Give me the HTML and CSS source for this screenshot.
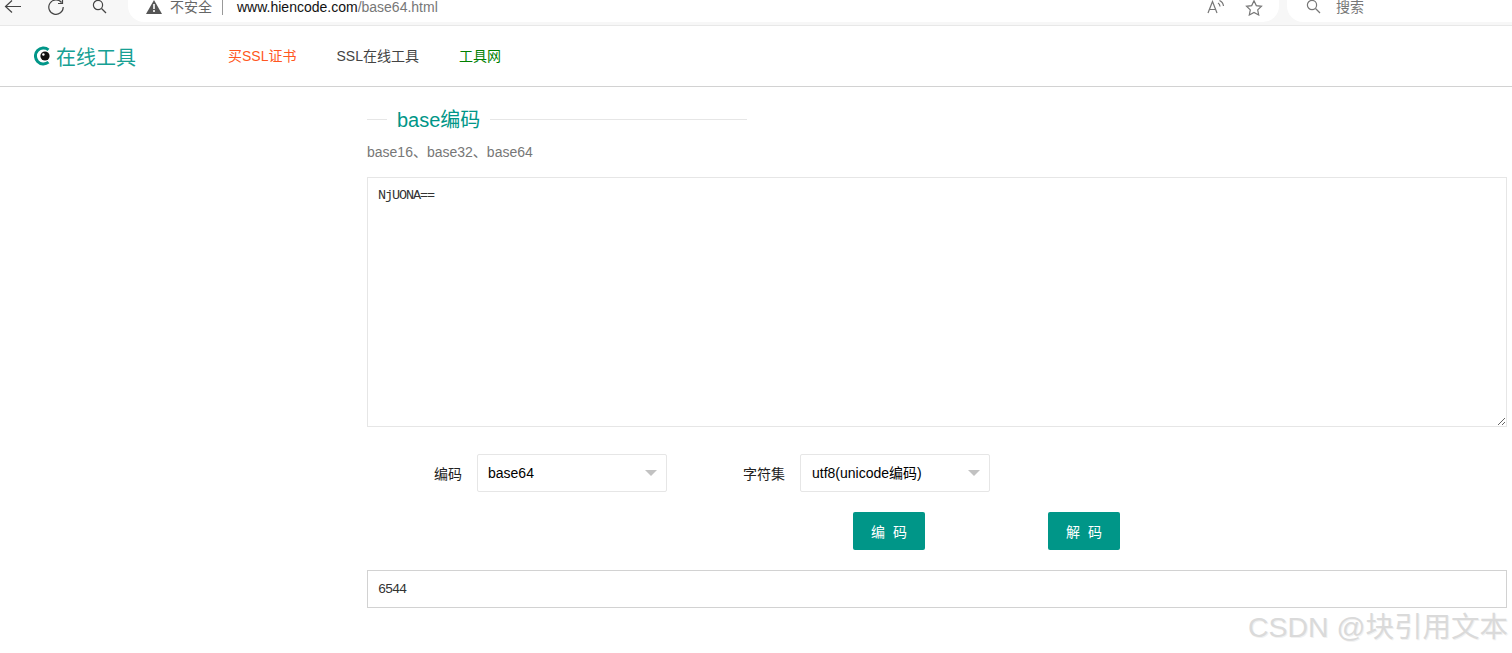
FILE: index.html
```html
<!DOCTYPE html>
<html lang="zh-CN">
<head>
    <meta charset="UTF-8">
    <meta name="viewport" content="width=device-width, initial-scale=1.0">
    <title>base编码</title>
    <link rel="stylesheet" href="styles.css">
</head>
<body>
    <div class="browser-bar">
        <svg class="bar-icon back" width="18" height="14" viewBox="0 0 18 14"><path d="M17 6.5H2M8 0.5L1.5 6.5L8 12.5" /></svg>
        <svg class="bar-icon reload" width="18" height="16" viewBox="0 0 18 16"><path d="M14.5 2.5A7.2 7.2 0 1 0 16.2 7M15.5 -1V3.5H11" /></svg>
        <svg class="bar-icon find" width="16" height="14" viewBox="0 0 16 14"><circle cx="6" cy="5" r="4.6" /><path d="M9.5 8.5L14 13" /></svg>
        <div class="address">
            <svg class="warn" width="16" height="14" viewBox="0 0 16 14"><path d="M8 0L16 14H0Z" fill="#555" /><path d="M7.2 4h1.6v5H7.2zM7.2 10h1.6v2H7.2z" fill="#fff" /></svg>
            <span class="not-safe">不安全</span>
            <span class="url"><b>www.hiencode.com</b>/base64.html</span>
            <svg class="bar-icon read" width="18" height="14" viewBox="0 0 18 14"><path d="M1 13L5.5 1.5L10 13M2.6 9.5H8.4M11 3A4 4 0 0 1 13 6.5M12.5 0.5A7 7 0 0 1 16.5 6" /></svg>
            <svg class="bar-icon star" width="18" height="16" viewBox="0 0 18 16"><path d="M9 0.8L11.3 5.6L16.5 6.3L12.7 9.9L13.7 15L9 12.5L4.3 15L5.3 9.9L1.5 6.3L6.7 5.6Z" /></svg>
        </div>
        <div class="search-box">
            <svg class="bar-icon" width="16" height="14" viewBox="0 0 16 14"><circle cx="6" cy="5" r="4.6" /><path d="M9.5 8.5L14 13" /></svg>
            <span>搜索</span>
        </div>
    </div>

    <div class="header">
        <a class="logo">
            <svg width="18" height="20" viewBox="0 0 18 20"><path d="M14.5 3.8A8 8 0 1 0 14.5 16.2" fill="none" stroke="#009688" stroke-width="3" /><circle cx="11" cy="10" r="4.6" fill="#111" /><circle cx="9.4" cy="8.5" r="1.2" fill="#fff" /></svg>
            <span>在线工具</span>
        </a>
        <a class="nav-link orange">买SSL证书</a>
        <a class="nav-link">SSL在线工具</a>
        <a class="nav-link green">工具网</a>
    </div>

    <div class="main">
        <div class="title"><span>base编码</span></div>
        <p class="sub">base16、base32、base64</p>
        <textarea class="source">NjUONA==</textarea>

        <div class="form-row">
            <label class="form-label">编码</label>
            <div class="select-wrap">
                <select>
                    <option>base64</option>
                    <option>base32</option>
                    <option>base16</option>
                </select>
            </div>
            <label class="form-label second">字符集</label>
            <div class="select-wrap">
                <select>
                    <option>utf8(unicode编码)</option>
                    <option>gbk</option>
                </select>
            </div>
        </div>

        <div class="buttons">
            <button>编 码</button>
            <button>解 码</button>
        </div>

        <input class="result" type="text" value="6544">
    </div>

    <div class="watermark">CSDN @块引用文本</div>
</body>
</html>
```

FILE: styles.css
```css
* {
    box-sizing: border-box;
}
html, body {
    height: 100%;
}
body {
    margin: 0;
    background: #fff;
    font-family: "Liberation Sans", "Noto Sans CJK SC", sans-serif;
    font-size: 14px;
    color: #333;
    overflow: hidden;
}

/* browser chrome, cut off at the top */
.browser-bar {
    display: flex;
    align-items: flex-start;
    height: 26px;
    padding-left: 4px;
    background: #f7f7f7;
    border-bottom: 1px solid #e8e8e8;
    overflow: hidden;
}
.bar-icon {
    flex: none;
    fill: none;
    stroke: #444;
    stroke-width: 1.2;
}
.back {
    margin-right: 25px;
}
.reload {
    margin-right: 27px;
}
.find {
    margin-right: 20px;
}
.address {
    display: flex;
    align-items: flex-start;
    width: 1151px;
    height: 22px;
    padding-left: 18px;
    background: #fff;
    border-radius: 0 0 16px 16px;
}
.warn {
    flex: none;
}
.not-safe {
    margin-left: 8px;
    padding-right: 10px;
    border-right: 1px solid #999;
    line-height: 15px;
    color: #666;
}
.url {
    margin-left: 14px;
    line-height: 15px;
    font-size: 14px;
    color: #777;
}
.url b {
    font-weight: normal;
    color: #111;
}
.read {
    margin-left: auto;
    stroke: #777;
}
.star {
    margin-left: 20px;
    margin-right: 16px;
    stroke: #777;
}
.search-box {
    display: flex;
    align-items: flex-start;
    flex: 1;
    height: 22px;
    margin-left: 8px;
    padding-left: 19px;
    background: #fff;
    border-radius: 0 0 0 16px;
    color: #777;
}
.search-box .bar-icon {
    stroke: #777;
}
.search-box span {
    margin-left: 14px;
    line-height: 15px;
}

.header {
    display: flex;
    align-items: center;
    height: 61px;
    padding-left: 34px;
    border-bottom: 1px solid #d2d2d2;
}
.logo {
    display: flex;
    align-items: center;
    width: 194px;
    color: #16a094;
    font-size: 20px;
}
.logo span {
    margin-left: 4px;
}
.nav-link {
    margin-right: 40px;
    padding-bottom: 2px;
    color: #444;
}
.orange {
    color: #ff5722;
}
.green {
    color: #008000;
}

.main {
    width: 1140px;
    margin-left: 367px;
}
.title {
    display: flex;
    align-items: center;
    width: 380px;
    height: 28px;
    margin-top: 18px;
    color: #009688;
    font-size: 20px;
}
.title::before,
.title::after {
    content: "";
    height: 1px;
    background: #e6e6e6;
}
.title::before {
    width: 20px;
}
.title::after {
    flex: 1;
}
.title span {
    padding: 0 10px 2px;
}
.sub {
    margin: 9px 0 15px;
    line-height: 20px;
    color: #777;
}
.source {
    display: block;
    width: 100%;
    height: 250px;
    padding: 10px;
    border: 1px solid #e6e6e6;
    font-family: "Liberation Mono", "Noto Sans CJK SC", monospace;
    font-size: 13.5px;
    letter-spacing: -1.1px;
    line-height: 16px;
    color: #333;
    outline: none;
}

.form-row {
    display: flex;
    align-items: center;
    margin-top: 27px;
}
.form-label {
    width: 110px;
    padding-right: 15px;
    text-align: right;
    color: #222;
}
.second {
    margin-left: 23px;
}
.second + .select-wrap select {
    padding-left: 11px;
}
.select-wrap {
    position: relative;
    width: 190px;
}
.select-wrap::after {
    content: "";
    position: absolute;
    top: 16px;
    right: 10px;
    border: 6px solid transparent;
    border-top-color: #c2c2c2;
    border-bottom: 0;
    pointer-events: none;
}
select {
    display: block;
    width: 100%;
    height: 38px;
    padding: 0 10px;
    border: 1px solid #e6e6e6;
    border-radius: 2px;
    background: #fff;
    font-family: inherit;
    font-size: 14px;
    color: #000;
    appearance: none;
    outline: none;
}

.buttons {
    display: flex;
    gap: 123px;
    margin-top: 20px;
    padding-left: 486px;
}
button {
    width: 72px;
    height: 38px;
    padding: 0;
    border: none;
    border-radius: 2px;
    background: #009688;
    color: #fff;
    font-family: inherit;
    font-size: 14px;
    word-spacing: 4px;
}

.result {
    display: block;
    width: 100%;
    height: 38px;
    margin-top: 20px;
    padding: 0 10px;
    border: 1px solid #d2d2d2;
    font-family: "Liberation Mono", "Noto Sans CJK SC", monospace;
    font-size: 13.5px;
    letter-spacing: -1.1px;
    color: #333;
    outline: none;
}

.watermark {
    position: absolute;
    right: 4px;
    top: 610px;
    font-size: 28.5px;
    line-height: 34px;
    color: #dadada;
    text-shadow: 1px 1px 0 #f1f1f1;
    white-space: nowrap;
}
```
